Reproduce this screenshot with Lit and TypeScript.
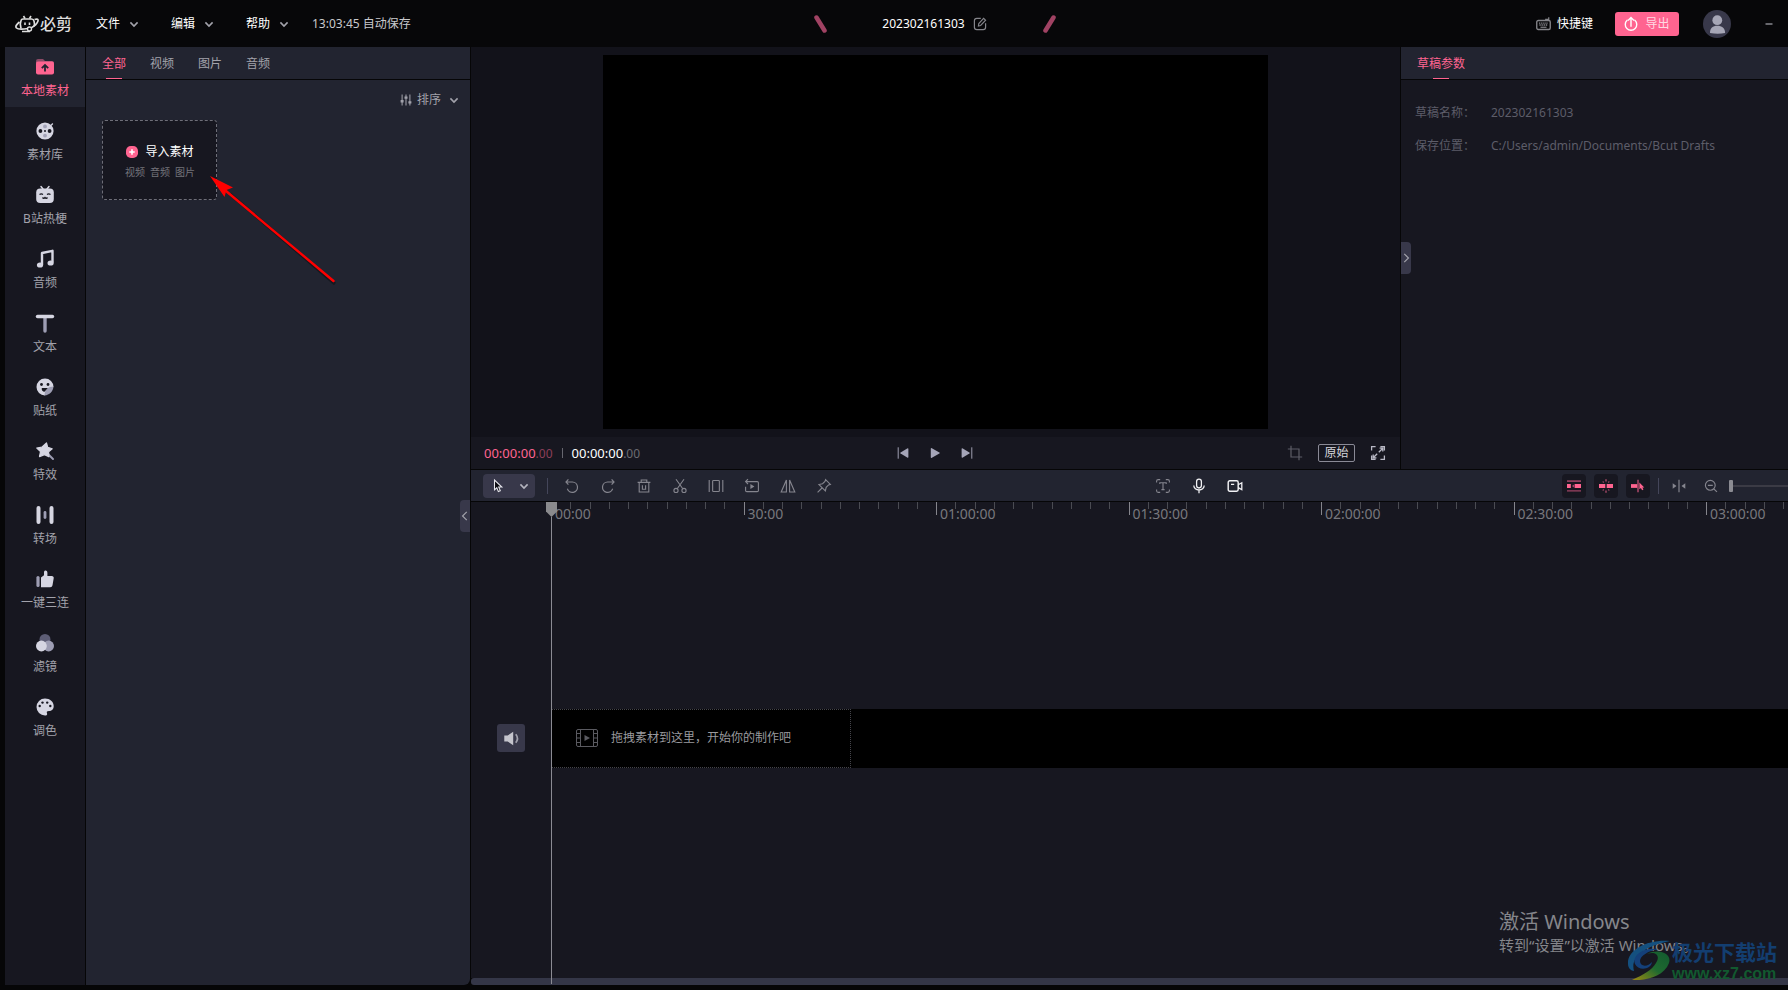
import { LitElement, html, svg, css, TemplateResult } from "lit";
import { customElement, state, property } from "lit/decorators.js";
import { classMap } from "lit/directives/class-map.js";

const shapes: Record<string, TemplateResult> = {
  local: svg`<path d="M1 4a2 2 0 0 1 2-2h5l2 2h7a2 2 0 0 1 2 2v3H1z" fill="#8d4a66"/><rect x="1" y="4.5" width="18" height="13" rx="2" fill="#ff6490"/><path d="M10 14.5V8.500M6.800 11.200L10 8l3.200 3.200" fill="none" stroke="#222430" stroke-width="1.800"/>`,
  reel: svg`<circle cx="10" cy="10" r="8.600" fill="#d6d6e2"/><path d="M16 4.500l1.800-2" stroke="#d6d6e2" stroke-width="1.200"/><g fill="#a3a3b8"><circle cx="10" cy="5.400" r="1.900"/><circle cx="10" cy="14.600" r="1.900"/></g><g fill="#171720"><circle cx="5.400" cy="10" r="1.900"/><circle cx="14.600" cy="10" r="1.900"/><circle cx="10" cy="10" r="1"/></g>`,
  tv: svg`<path d="M6 1.500L8 4M14 1.500L12 4" stroke="#d6d6e2" stroke-width="1.500" stroke-linecap="round"/><rect x="1.200" y="3.500" width="17.600" height="14.500" rx="4" fill="#d6d6e2"/><path d="M4.500 9.500q1.800-1.200 3.500 0M12 9.500q1.700-1.200 3.500 0M7.500 12.500q1.200 1.500 2.500 0q1.300 1.500 2.500 0" fill="none" stroke="#171720" stroke-width="1.300"/>`,
  music: svg`<path d="M7 16V4l10.500-2.200V13.500" fill="none" stroke="#d6d6e2" stroke-width="2.400" stroke-linejoin="round"/><ellipse cx="5" cy="16" rx="3.100" ry="2.600" fill="#d6d6e2"/><ellipse cx="15.600" cy="14" rx="3.100" ry="2.600" fill="#d6d6e2"/>`,
  text: svg`<path d="M10 5v13" stroke="#9d9db3" stroke-width="3.400" stroke-linecap="round"/><path d="M2.500 3.500h15" stroke="#d6d6e2" stroke-width="3.400" stroke-linecap="round"/>`,
  sticker: svg`<path d="M10 1.500a8.500 8.500 0 1 0 0 17c1.500-5 4-7.500 8.500-8.500A8.500 8.500 0 0 0 10 1.500z" fill="#d6d6e2"/><path d="M9.500 18.500c5-.5 8.500-4 9-9-5 0-9 3-9 9z" fill="#9d9db3"/><g fill="#171720"><circle cx="6.500" cy="7.500" r="1.400"/><circle cx="13" cy="7.500" r="1.400"/><path d="M6.800 11h6l-3.300 3.800A3 3 0 0 1 6.800 11z"/></g>`,
  effect: svg`<path d="M13 13l5 5" stroke="#9d9db3" stroke-width="2" stroke-linecap="round"/><path d="M11.500 2l1.200 4.300 4.500 1.500-3.600 3 .3 5-4.400-2.200-5 2 1-5L1.800 7l5-.8z" fill="#d6d6e2" stroke="#d6d6e2" stroke-width="1.200" stroke-linejoin="round"/>`,
  transition: svg`<path d="M3.500 3v14M16.500 3v14" stroke="#d6d6e2" stroke-width="4" stroke-linecap="round"/><path d="M10 7.500v5" stroke="#9d9db3" stroke-width="2.800" stroke-linecap="round"/>`,
  thumb: svg`<path d="M3 8.500v8" stroke="#9d9db3" stroke-width="3.200" stroke-linecap="round"/><path d="M6 8.500L9 6.200V3.200c0-2.600 3.400-2.400 3.400.5V7h4.300c1.500 0 2.200 1 2 2.200l-1.200 7c-.3 1.300-1 2-2.300 2H6z" fill="#d6d6e2"/>`,
  filter: svg`<circle cx="10" cy="6.500" r="5.500" fill="#5d5d75"/><circle cx="13.600" cy="13" r="5.400" fill="#9d9db3"/><circle cx="6.400" cy="13" r="5.400" fill="#d6d6e2"/>`,
  palette: svg`<path d="M10 1.500c5 0 8.700 3.200 8.700 7.500 0 3.500-2 5-4.700 5-2 0-2.600.8-2 2.200.6 1.500-.4 2.300-2 2.300A8.500 8.500 0 0 1 10 1.500z" fill="#d6d6e2"/><g fill="#171720"><circle cx="4.700" cy="9" r="1.200"/><circle cx="7.500" cy="5.600" r="1.200"/><circle cx="12.200" cy="5.600" r="1.200"/><circle cx="15.300" cy="9" r="1.200"/></g>`,
  chevron: svg`<path d="M5.500 8l4.500 4.500L14.500 8" fill="none" stroke="currentColor" stroke-width="2"/>`,
  left: svg`<path d="M12.500 4l-6 6 6 6" fill="none" stroke="currentColor" stroke-width="1.700"/>`,
  right: svg`<path d="M7.500 4l6 6-6 6" fill="none" stroke="currentColor" stroke-width="1.700"/>`,
  edit: svg`<path d="M11 3H6Q3 3 3 6v8q0 3 3 3h8q3 0 3-3V9" fill="none" stroke="currentColor" stroke-width="1.500"/><path d="M8 12.500l.5-3L14.500 3l2.500 2.300-6.200 6.500z" fill="none" stroke="currentColor" stroke-width="1.400"/>`,
  keyboard: svg`<rect x="1" y="6" width="18" height="12" rx="2" fill="none" stroke="currentColor" stroke-width="1.800"/><path d="M13 6V4.500h4V1.500" fill="none" stroke="currentColor" stroke-width="1.600"/><path d="M4 9.500h12M4.500 12h11.500" stroke="currentColor" stroke-width="1.800" stroke-dasharray="1.800 1"/><path d="M6 15h8" stroke="currentColor" stroke-width="1.600"/>`,
  export: svg`<path d="M4.500 4.700a8.200 8.200 0 1 0 11 0" fill="none" stroke="currentColor" stroke-width="2" stroke-linecap="round"/><path d="M10 14V1.500M5.800 5L10 .8 14.200 5" fill="none" stroke="currentColor" stroke-width="2"/>`,
  sort: svg`<path d="M3.500 1v18M10 1v18M16.500 1v18" stroke="currentColor" stroke-width="1.700"/><path d="M1 12h5M7.500 6h5M14 14h5" stroke="currentColor" stroke-width="4"/>`,
  prev: svg`<path d="M2 .5v19" stroke="currentColor" stroke-width="1.600"/><path d="M17 2.500q2-1 2 1v13q0 2-2 1L6 11q-1.500-1 0-2z" fill="currentColor"/>`,
  play: svg`<path d="M3 3q0-2 1.800-1l12.500 7q1.800 1 0 2l-12.500 7Q3 19 3 17z" fill="currentColor"/>`,
  next: svg`<path d="M18 .5v19" stroke="currentColor" stroke-width="1.600"/><path d="M3 2.500q-2-1-2 1v13q0 2 2 1L14 11q1.500-1 0-2z" fill="currentColor"/>`,
  crop: svg`<path d="M1 5h14v14M5 1v14h14" fill="none" stroke="currentColor" stroke-width="1.500"/>`,
  full: svg`<path d="M2 7V2h5M13 2h5v5M18 13v5h-5M7 18H2v-5M11 9l5-5M12 4h4v4M9 11l-5 5M4 12v4h4" fill="none" stroke="currentColor" stroke-width="1.600"/>`,
  cursor: svg`<path d="M5 1.500v14l3.300-3 2.200 5.500 2.800-1.200L11 11.500h4.500z" fill="#0b0b10" stroke="#e8e8ee" stroke-width="1.500"/>`,
  undo: svg`<path d="M3 5h7.500a6.500 6.500 0 1 1-6.300 8.500M5.500 1.800L2.500 5l3 3.200" fill="none" stroke="currentColor" stroke-width="1.500"/>`,
  redo: svg`<path d="M17 5H9.500a6.500 6.500 0 1 0 6.300 8.500M14.500 1.800l3 3.200-3 3.200" fill="none" stroke="currentColor" stroke-width="1.500"/>`,
  trash: svg`<path d="M2 5.500h16M6.500 5V2.500h7V5M4 5.500v12h12v-12M8 9v5h4V9" fill="none" stroke="currentColor" stroke-width="1.400"/>`,
  cut: svg`<path d="M5 1.500l8.500 12M15 1.500l-8.500 12" fill="none" stroke="currentColor" stroke-width="1.400"/><circle cx="5" cy="15.500" r="2.600" fill="none" stroke="currentColor" stroke-width="1.400"/><circle cx="15" cy="15.500" r="2.600" fill="none" stroke="currentColor" stroke-width="1.400"/>`,
  split: svg`<path d="M1.500 2.500v15M18.500 2.500v15" stroke="currentColor" stroke-width="1.400"/><rect x="5.800" y="3.200" width="8.400" height="13.600" rx="1" fill="none" stroke="currentColor" stroke-width="1.400"/>`,
  reverse: svg`<path d="M5 1.500L2 4.500l3 3M2 4.500h14.500q1.500 0 1.500 1.500v10q0 1-1.500 1h-13Q2 17 2 16v-5" fill="none" stroke="currentColor" stroke-width="1.400"/><path d="M8 7.500l5 3.200-5 3.200z" fill="currentColor"/>`,
  mirror: svg`<path d="M8 2.500v15H1.500zM12 2.500v15h6.500z" fill="none" stroke="currentColor" stroke-width="1.400"/>`,
  pin: svg`<path d="M12 2L18 8l-2.300.7-3 3-1 4.500-8-8 4.500-1 3-3zM7.500 12.500L2 18" fill="none" stroke="currentColor" stroke-width="1.400"/>`,
  ocr: svg`<path d="M2 5.500V4q0-2 2-2h2.500M13.500 2H16q2 0 2 2v1.500M18 14.500V16q0 2-2 2h-2.500M6.500 18H4q-2 0-2-2v-1.500M6 7.500V6h8v1.500M10 6v8.500M8 14.500h4" fill="none" stroke="currentColor" stroke-width="1.400"/>`,
  mic: svg`<rect x="7" y="1.500" width="6" height="11" rx="3" fill="none" stroke="currentColor" stroke-width="1.600"/><path d="M3.500 9.500a6.500 5.500 0 0 0 13 0M10 15V19" fill="none" stroke="currentColor" stroke-width="1.600"/>`,
  camera: svg`<rect x="1.500" y="3.500" width="12.500" height="13" rx="2" fill="none" stroke="currentColor" stroke-width="1.800"/><path d="M14 8.500l4.500-2.500v8.500L14 12M5 8h4" fill="none" stroke="currentColor" stroke-width="1.600"/>`,
  magnet: svg`<path d="M0 3h20" stroke="#8d3f5d" stroke-width="2.500"/><path d="M0 17h20" stroke="#b94c70" stroke-width="1.500"/><path d="M0 7.300h5.500v5.400H0zM11 7.300h9v5.400h-9z" fill="#ff6490"/><path d="M10.500 7.500L7 10l3.500 2.500z" fill="#a84668"/>`,
  link: svg`<path d="M0 7.300h9v5.400H0zM11 7.300h9v5.400h-9z" fill="#ff6490"/><path d="M10 .5v3M10 16.500v3M6.500 5l-1-1.500M13.500 5l1-1.500M6.500 15l-1 1.500M13.500 15l1 1.500" stroke="#d95a80" stroke-width="1.500"/>`,
  snap: svg`<path d="M0 7.300h9v5.400H0z" fill="#ff6490"/><path d="M10 1v18" stroke="#b94c70" stroke-width="2"/><path d="M12 5v9.500l2.200-1.700 1.600 3.200 2-1-1.600-3H19z" fill="#ff6490"/>`,
  spread: svg`<path d="M10 1v18" stroke="currentColor" stroke-width="1.700"/><path d="M1 6l5.500 4L1 14zM19 6l-5.500 4 5.500 4z" fill="currentColor"/>`,
  zoomout: svg`<circle cx="9" cy="9" r="7" fill="none" stroke="currentColor" stroke-width="1.600"/><path d="M5.500 9h7M14 14l4.500 4.500" stroke="currentColor" stroke-width="1.700"/>`,
  sound: svg`<path d="M1.500 6.500h4L12 2v16l-6.500-4.500h-4z" fill="#c4c4cc"/><path d="M15 5q4 5 0 10" fill="none" stroke="#a0a0ac" stroke-width="2"/>`,
  plus: svg`<rect width="20" height="20" rx="8" fill="#ff6490"/><path d="M10 5.500v9M5.500 10h9" stroke="#fff" stroke-width="2.600"/>`,
  user: svg`<circle cx="10" cy="10" r="10" fill="#38384a"/><circle cx="10.200" cy="7.300" r="3.500" fill="#a6a6b6"/><path d="M5 16.500c0-3.500 2-5.200 5.200-5.200s5.600 1.700 5.600 5.200q-5.200 1-10.800 0z" fill="#a6a6b6"/>`,
  min: svg`<path d="M3 10h14" stroke="currentColor" stroke-width="4"/>`,
};

@customElement("ui-icon")
class UiIcon extends LitElement {
  @property() name = "";
  @property({ type: Number }) size = 14;
  static styles = css`
    :host { display: inline-flex; flex: none; }
    svg { display: block; overflow: visible; }
  `;
  render() {
    return html`<svg width=${this.size} height=${this.size} viewBox="0 0 20 20" aria-hidden="true">${shapes[this.name]}</svg>`;
  }
}

const NAV: [string, string][] = [
  ["local", "本地素材"], ["reel", "素材库"], ["tv", "B站热梗"], ["music", "音频"],
  ["text", "文本"], ["sticker", "贴纸"], ["effect", "特效"], ["transition", "转场"],
  ["thumb", "一键三连"], ["filter", "滤镜"], ["palette", "调色"],
];
const TABS = ["全部", "视频", "图片", "音频"];
const MARKS = ["00:00", "30:00", "01:00:00", "01:30:00", "02:00:00", "02:30:00", "03:00:00"];
const TICKS_PER_MARK = 10;
const EDIT_TOOLS: [string, string][] = [
  ["undo", "撤销"], ["redo", "重做"], ["trash", "删除"], ["cut", "剪切"],
  ["split", "裁剪"], ["reverse", "倒放"], ["mirror", "镜像"], ["pin", "标记"],
];

@customElement("app-root")
class AppRoot extends LitElement {
  @state() private nav = 0;
  @state() private tab = 0;
  @state() private pxPerMark = 192.5;

  static styles = css`
    :host {
      display: block;
      height: 100vh;
      font-family: "Noto Sans", "Noto Sans CJK SC", sans-serif;
      font-size: 12px;
      line-height: 16px;
      color: #a2a2ab;
    }
    * { box-sizing: border-box; }
    button {
      font: inherit; color: inherit; background: none; border: 0; padding: 0; margin: 0;
      display: inline-flex; align-items: center; justify-content: center; white-space: nowrap;
    }
    .app {
      position: relative; height: 100%; overflow: hidden; background: #060607;
      display: grid; grid-template-rows: 47px minmax(0, 1fr); padding-bottom: 5px;
    }
    .top { display: grid; grid-template-columns: 470px minmax(0, 1fr) 388px; background: #070709; }
    .menus, .title, .account { display: flex; align-items: center; white-space: nowrap; }
    .menus { padding-left: 15px; }
    .brand { display: flex; align-items: center; gap: 1px; width: 81px; color: #dedede; font-size: 16px; font-weight: 500; }
    .menu { color: #fff; gap: 6px; width: 75px; justify-content: flex-start; }
    .menu ui-icon, .sort ui-icon { color: #a2a2ab; }
    .saved { color: #c9c9cd; margin-left: -9px; }
    .title { justify-content: center; gap: 55px; color: #fff; }
    .name { display: flex; align-items: center; gap: 7px; }
    .name button { color: #85858b; }
    .account { justify-content: flex-end; padding-right: 14px; color: #fff; }
    .keys { gap: 6px; margin-right: 22px; }
    .keys ui-icon { color: #85858a; }
    .export { background: #ff6490; color: #ffd9e3; height: 24px; width: 64px; border-radius: 3px; gap: 7px; margin-right: 24px; }
    .export ui-icon { color: #fff; }
    .avatar { margin-right: 33px; }
    .minimize { color: #66666c; }

    .body { display: grid; grid-template-columns: 80px 384px minmax(0, 1fr); gap: 1px; padding-left: 5px; min-height: 0; }
    .nav { background: #171720; display: flex; flex-direction: column; gap: 4px; }
    .nav button { height: 60px; flex-direction: column; gap: 6px; padding-top: 1px; }
    .nav button.on { background: #222430; color: #ff6490; }

    .panel { position: relative; background: #222430; border-bottom-right-radius: 6px; }
    .tabs { display: flex; gap: 24px; height: 33px; padding: 0 16px; border-bottom: 1px solid #060607; }
    .tab { height: 32px; position: relative; padding-top: 2px; }
    .tab.on { color: #ff6490; }
    .tab.on::after { content: ""; position: absolute; left: calc(50% - 8px); bottom: 0; width: 16px; height: 1px; background: #ff6490; }
    .sort { display: flex; width: 100%; justify-content: flex-end; gap: 5px; padding: 12px 8px; }
    .import {
      display: flex; flex-direction: column; width: 115px; height: 80px; margin-left: 16px; gap: 4px; padding: 4px 0 0 1px;
      background: #171720; border: 1px dashed #6e6e78; border-radius: 3px;
    }
    .import strong { font-weight: 400; color: #fff; display: flex; align-items: center; gap: 7px; }
    .import small { font-size: 10px; color: #74747b; display: flex; gap: 5px; }
    .handle { position: absolute; width: 10px; height: 32px; background: #38384a; color: #a2a2ab; }
    .handle.l { right: 0; top: 453px; border-radius: 4px 0 0 4px; }
    .handle.r { left: 0; top: 195px; border-radius: 0 4px 4px 0; }

    .work { display: grid; grid-template-rows: auto 31px minmax(0, 1fr) 6px; row-gap: 1px; min-height: 0; }
    .upper { display: grid; grid-template-columns: minmax(0, 1fr) 387px; gap: 1px; }
    .viewer { display: flex; flex-direction: column; background: #171720; }
    .stage { background: #12121a; padding: 8px; display: flex; justify-content: center; }
    .screen { height: 374px; aspect-ratio: 16 / 9; background: #000; }
    .transport { height: 32px; display: grid; grid-template-columns: 1fr auto 1fr; align-items: center; padding: 0 14px 0 13px; }
    .times { display: flex; align-items: center; gap: 9px; font-size: 13px; color: #fff; }
    .times i { width: 1px; height: 10px; background: #66666f; }
    .times small { font-size: 12px; }
    .now { color: #ff6490; }
    .now small { color: #8d3f58; }
    .total small { color: #6c6c72; }
    .keysbar { display: flex; gap: 20px; color: #a5a5b8; }
    .view { display: flex; gap: 15px; align-items: center; justify-content: flex-end; color: #b8b8c4; }
    .view .dim { color: #5d5d66; }
    .ratio { border: 1px solid #8a8a96; border-radius: 2px; height: 18px; width: 37px; color: #d6d6dc; }

    .inspector { position: relative; background: #171720; }
    .inspector .tabs { background: #222430; }
    dl { margin: 0; padding: 25px 14px; display: grid; grid-template-columns: 76px 1fr; row-gap: 17px; color: #5d5d69; }
    dd { margin: 0; }

    .tools { background: #222430; display: flex; align-items: center; justify-content: space-between; padding-left: 12px; color: #85858e; min-width: 0; }
    .group { display: flex; align-items: center; }
    .start { gap: 12px; padding-right: 4px; }
    .bright { gap: 20px; color: #f2f2f5; }
    .bright .dim { color: #85858e; }
    .pick { background: #38384a; border-radius: 4px; width: 52px; height: 24px; gap: 11px; padding-left: 8px; justify-content: flex-start; color: #b5b5bf; }
    .bar { width: 1px; height: 16px; background: #44465a; }
    .edits { display: flex; gap: 20px; padding-left: 4px; }
    .right { gap: 8px; }
    .right .toggle { width: 24px; height: 24px; border-radius: 4px; background: #171720; }
    .right .plain { width: 24px; height: 24px; }
    .zoom { appearance: none; background: none; width: 59px; height: 16px; margin: 0 0 0 -2px; }
    .zoom::-webkit-slider-runnable-track { height: 2px; background: #3b3b45; }
    .zoom::-webkit-slider-thumb { appearance: none; width: 4px; height: 12px; margin-top: -5px; border-radius: 1px; background: #8b8b92; }

    .timeline { position: relative; background: #171720; min-width: 0; display: flex; flex-direction: column; padding-left: 80px; }
    .ruler { display: flex; height: 26px; overflow: hidden; }
    .mark { flex: none; position: relative; display: flex; }
    .tick { flex: 1; height: 7px; border-left: 1px solid #4a4b52; }
    .tick:first-child { height: 13px; border-color: #85858c; }
    .mark span { position: absolute; left: 4px; top: 2px; font-size: 14px; line-height: 20px; color: #77777d; }
    .tracks { flex: 1; display: flex; align-items: center; margin-left: -54px; padding-bottom: 30px; }
    .mute { width: 28px; height: 28px; background: #38384a; border-radius: 3px; margin-right: 26px; flex: none; }
    .track { flex: 1; background: #000; height: 59px; display: flex; }
    .drop { width: 300px; border: 1px dotted #44444a; display: flex; align-items: center; gap: 13px; padding-left: 24px; color: #9a9a9e; }
    .film { display: block; }
    .playhead { position: absolute; z-index: 1; left: 75px; top: 0; bottom: -6px; width: 11px; display: flex; flex-direction: column; align-items: center; }
    .playhead svg { display: block; flex: none; }
    .playhead i { width: 1px; flex: 1; background: #8b8b93; }
    .scroll { background: #343647; border-radius: 3px 0 0 3px; margin-top: -1px; }

    .pointer { position: absolute; left: 204px; top: 170px; pointer-events: none; }
    .activate { position: absolute; right: 96px; bottom: 34px; width: 193px; color: #85868b; font-size: 15px; line-height: 22px; white-space: nowrap; pointer-events: none; }
    .activate b { display: block; font-weight: 400; font-size: 20px; line-height: 24px; }
    .site { position: absolute; right: 11px; bottom: 6px; display: flex; align-items: center; gap: 1px; pointer-events: none; white-space: nowrap; }
    .site svg { margin-bottom: 4px; }
    .site b { display: block; font-size: 21px; line-height: 24px; color: #133e70; }
    .site em { display: block; font: 700 16px/20px "Liberation Sans", sans-serif; color: #12592f; }
  `;

  private tool(name: string, label: string, size = 16, cls = "") {
    return html`<button class=${cls} aria-label=${label}><ui-icon name=${name} .size=${size}></ui-icon></button>`;
  }

  private header() {
    return html`<header class="top">
      <div class="menus">
        <div class="brand">
          <svg width="24" height="18" viewBox="0 0 24 18" fill="none" stroke="currentColor" aria-hidden="true">
            <path d="M8.500 1l1.500 2.500M16 1l-1.500 2.500" stroke-width="1.600"/>
            <path d="M6 13.500Q4.500 9 6 5.500Q6.500 4 8 4h8.500Q18.500 4 19 6q1 3 0 5.500" stroke-width="1.700"/>
            <path d="M4.500 7Q-.5 11 1.500 13T13 13.500M19.500 4.500Q24 3 22.800 6.500T16 13M7 16.500h8" stroke-width="1.700"/>
            <path d="M10 7.500V10M14.500 7.500V10" stroke-width="1.600"/><circle cx="14.500" cy="14" r="2" stroke-width="1.400"/>
          </svg><span>必剪</span>
        </div>
        ${["文件", "编辑", "帮助"].map((m) => html`<button class="menu">${m}<ui-icon name="chevron" .size=${16}></ui-icon></button>`)}
        <span class="saved">13:03:45 自动保存</span>
      </div>
      <div class="title">
        <svg width="13" height="18" viewBox="0 0 13 18" aria-hidden="true"><path d="M2.500 2.500l8 13" stroke="#a04263" stroke-width="4.500" stroke-linecap="round"/></svg>
        <span class="name">202302161303 ${this.tool("edit", "重命名", 16)}</span>
        <svg width="13" height="18" viewBox="0 0 13 18" aria-hidden="true"><path d="M10.500 2.500l-8 13" stroke="#a04263" stroke-width="4.500" stroke-linecap="round"/></svg>
      </div>
      <div class="account">
        <button class="keys"><ui-icon name="keyboard" .size=${15}></ui-icon>快捷键</button>
        <button class="export"><ui-icon name="export" .size=${14}></ui-icon>导出</button>
        ${this.tool("user", "账号", 28, "avatar")}
        ${this.tool("min", "最小化", 10, "minimize")}
      </div>
    </header>`;
  }

  private upper() {
    return html`<div class="upper">
      <section class="viewer">
        <div class="stage"><div class="screen"></div></div>
        <div class="transport">
          <div class="times"><span class="now">00:00:00<small>.00</small></span><i></i><span class="total">00:00:00<small>.00</small></span></div>
          <div class="keysbar">${this.tool("prev", "上一帧", 12)}${this.tool("play", "播放", 12)}${this.tool("next", "下一帧", 12)}</div>
          <div class="view">${this.tool("crop", "裁切", 16, "dim")}<button class="ratio">原始</button>${this.tool("full", "全屏", 16)}</div>
        </div>
      </section>
      <section class="inspector">
        <div class="tabs"><button class="tab on">草稿参数</button></div>
        <dl><dt>草稿名称：</dt><dd>202302161303</dd><dt>保存位置：</dt><dd>C:/Users/admin/Documents/Bcut Drafts</dd></dl>
        ${this.tool("right", "收起参数", 14, "handle r")}
      </section>
    </div>`;
  }

  private timeline() {
    return html`<section class="timeline">
        <div class="ruler">${MARKS.map((m) => html`<div class="mark" style="width:${this.pxPerMark}px">
          ${Array.from({ length: TICKS_PER_MARK }, () => html`<i class="tick"></i>`)}<span>${m}</span></div>`)}</div>
        <div class="tracks">
          ${this.tool("sound", "静音", 17, "mute")}
          <div class="track"><div class="drop">
            <svg class="film" width="22" height="18" viewBox="0 0 22 18" fill="none" stroke="#5a5a60" aria-hidden="true">
              <rect x=".5" y=".5" width="21" height="17" rx="1.500"/><path d="M4.500 .5v17M17.500 .5v17M.5 4.500H4.500M.5 9H4.500M.5 13.500H4.500M17.500 4.500h4M17.500 9h4M17.500 13.500h4"/><path d="M8.500 6v6l5.500-3z" fill="#5a5a60" stroke="none"/>
            </svg><span>拖拽素材到这里，开始你的制作吧</span></div></div>
        </div>
        <div class="playhead"><svg width="11" height="15" viewBox="0 0 11 15" aria-hidden="true"><path d="M0 0h11v9.500L5.500 15 0 9.500z" fill="#8a8a8d"/></svg><i></i></div>
      </section>`;
  }

  render() {
    return html`<div class="app">
      ${this.header()}
      <div class="body">
        <nav class="nav">${NAV.map(([icon, label], i) => html`<button class=${classMap({ on: i === this.nav })} @click=${() => (this.nav = i)}>
          <ui-icon name=${icon} .size=${20}></ui-icon><span>${label}</span></button>`)}</nav>
        <section class="panel">
          <div class="tabs">${TABS.map((t, i) => html`<button class=${classMap({ tab: true, on: i === this.tab })} @click=${() => (this.tab = i)}>${t}</button>`)}</div>
          <button class="sort"><ui-icon name="sort" .size=${12}></ui-icon>排序<ui-icon name="chevron" .size=${16}></ui-icon></button>
          <button class="import"><strong><ui-icon name="plus" .size=${12}></ui-icon>导入素材</strong><small><span>视频</span><span>音频</span><span>图片</span></small></button>
          ${this.tool("left", "收起素材", 14, "handle l")}
        </section>
        <main class="work">
          ${this.upper()}
          <div class="tools">
            <div class="group start">
              <button class="pick" aria-label="选择工具"><ui-icon name="cursor" .size=${14}></ui-icon><ui-icon name="chevron" .size=${16}></ui-icon></button>
              <i class="bar"></i>
              <div class="edits">${EDIT_TOOLS.map(([n, l]) => this.tool(n, l))}</div>
            </div>
            <div class="group bright">${this.tool("ocr", "识别字幕", 16, "dim")}${this.tool("mic", "录音")}${this.tool("camera", "录像")}</div>
            <div class="group right">
              ${this.tool("magnet", "主轨磁吸", 14, "toggle")}${this.tool("link", "联动", 14, "toggle")}${this.tool("snap", "吸附", 14, "toggle")}
              <i class="bar"></i>${this.tool("spread", "适应宽度", 14, "plain")}${this.tool("zoomout", "缩小", 14, "plain")}
              <input class="zoom" type="range" min="0" max="100" value="0" aria-label="时间轴缩放">
            </div>
          </div>
          ${this.timeline()}
          <div class="scroll"></div>
        </main>
      </div>
      <svg class="pointer" width="140" height="120" viewBox="0 0 140 120" aria-hidden="true">
        <g opacity=".35" fill="#000" stroke="#000"><path d="M26 24L131 114" stroke-width="3"/></g>
        <path d="M22 21L129.500 111" stroke="#f00" stroke-width="2.400" stroke-linecap="round"/><path d="M6 6L29 17.500 22.500 20 20.500 27z" fill="#f00"/>
      </svg>
      <div class="activate"><b>激活 Windows</b>转到“设置”以激活 Windows。</div>
      <div class="site">
        <svg width="44" height="40" viewBox="0 0 44 40" aria-hidden="true">
          <defs><linearGradient id="g" x1="0" y1="1" x2="1" y2="0"><stop offset="0" stop-color="#a08a10"/><stop offset=".5" stop-color="#1f6a30"/><stop offset="1" stop-color="#12592f"/></linearGradient></defs>
          <path d="M43 1C22-1 0 9 1 24c0 4 3 7 6 7C3 17 18 6 43 1z" fill="#14507f"/>
          <path d="M31 9C15 7 5 16 8 24c3 7 16 6 17-2-4 5-12 5-12-1 0-5 8-10 18-12z" fill="#14407a"/>
          <path d="M20 14c8-3 14 1 9 9-4 7-13 12-24 17 12 1 32-3 37-17 3-9-9-15-22-9z" fill="url(#g)"/>
        </svg>
        <div><b>极光下载站</b><em>www.xz7.com</em></div>
      </div>
    </div>`;
  }
}
